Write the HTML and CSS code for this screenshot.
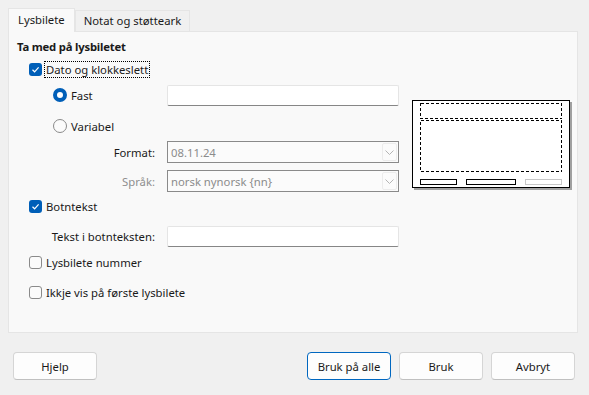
FILE: index.html
```html
<!DOCTYPE html>
<html lang="nn">
<head>
  <meta charset="UTF-8">
  <title>Topptekst og botntekst</title>
  <link rel="stylesheet" href="styles.css">
</head>
<body>
  <div class="dialog">
    <div class="tabs">
      <div class="tab active">Lysbilete</div>
      <div class="tab">Notat og støtteark</div>
    </div>

    <div class="panel">
      <div class="form">
        <div class="heading">Ta med på lysbiletet</div>

        <div class="row check-row">
          <span class="check on"><svg viewBox="0 0 13 13"><path d="M3.5 6.8 L5.6 8.8 L9.6 4.4"/></svg></span>
          <span class="label focus">Dato og klokkeslett</span>
        </div>

        <div class="row radio-row gap-4">
          <span class="radio-group">
            <span class="radio on"></span>
            <span class="label">Fast</span>
          </span>
          <span class="field"></span>
        </div>

        <div class="row radio-row gap-9">
          <span class="radio-group">
            <span class="radio"></span>
            <span class="label">Variabel</span>
          </span>
        </div>

        <div class="row field-row gap-4">
          <span class="field-label">Format:</span>
          <span class="select">
            <span class="select-text">08.11.24</span>
            <span class="select-btn"><svg viewBox="0 0 9 5"><path d="M0.5 0.5 L4.5 4.5 L8.5 0.5"/></svg></span>
          </span>
        </div>

        <div class="row field-row gap-7">
          <span class="field-label disabled">Språk:</span>
          <span class="select">
            <span class="select-text">norsk nynorsk {nn}</span>
            <span class="select-btn"><svg viewBox="0 0 9 5"><path d="M0.5 0.5 L4.5 4.5 L8.5 0.5"/></svg></span>
          </span>
        </div>

        <div class="row check-row gap-3">
          <span class="check on"><svg viewBox="0 0 13 13"><path d="M3.5 6.8 L5.6 8.8 L9.6 4.4"/></svg></span>
          <span class="label">Botntekst</span>
        </div>

        <div class="row field-row gap-8">
          <span class="field-label">Tekst i botnteksten:</span>
          <span class="field"></span>
        </div>

        <div class="row check-row gap-4">
          <span class="check"></span>
          <span class="label">Lysbilete nummer</span>
        </div>

        <div class="row check-row gap-8">
          <span class="check"></span>
          <span class="label">Ikkje vis på første lysbilete</span>
        </div>
      </div>

      <div class="preview">
        <svg width="161" height="92" viewBox="0 0 161 92" shape-rendering="crispEdges">
          <rect x="2.5" y="2.5" width="158" height="88" fill="#a0a0a0"/>
          <rect x="1.5" y="1.5" width="157" height="87" fill="#fff" stroke="#000"/>
          <rect x="9.5" y="4.5" width="141" height="15" fill="none" stroke="#000" stroke-dasharray="3 2"/>
          <rect x="9.5" y="21.5" width="141" height="51" fill="none" stroke="#000" stroke-dasharray="3 2"/>
          <rect x="9.5" y="80.5" width="36" height="5" fill="none" stroke="#000"/>
          <rect x="55.5" y="80.5" width="49" height="5" fill="none" stroke="#000"/>
          <rect x="114.5" y="80.5" width="36" height="5" fill="none" stroke="#c8c8c8"/>
        </svg>
      </div>
    </div>

    <div class="footer">
      <button class="btn">Hjelp</button>
      <div class="actions">
        <button class="btn default">Bruk på alle</button>
        <button class="btn">Bruk</button>
        <button class="btn">Avbryt</button>
      </div>
    </div>
  </div>
</body>
</html>
```

FILE: styles.css
```css
* {
  margin: 0;
  padding: 0;
  box-sizing: border-box;
}

body {
  background: #f0f0f0;
  font-family: 'Noto Sans', 'Open Sans', sans-serif;
  font-size: 11.3px;
  color: #1a1a1a;
}

.dialog {
  padding: 8px 11px 0 8px;
}

/* tabs */
.tabs {
  display: flex;
  align-items: flex-end;
  height: 23px;
}

.tab {
  height: 21px;
  padding: 0 8px;
  line-height: 19px;
  border: 1px solid #e5e5e5;
  border-bottom: none;
  background: #f0f0f0;
}

.tab.active {
  height: 24px;
  margin-bottom: -1px;
  line-height: 22px;
  padding: 0 9px;
  background: #f9f9f9;
  position: relative;
  z-index: 1;
}

.panel {
  display: flex;
  height: 302px;
  border: 1px solid #e5e5e5;
  background: #f9f9f9;
}

/* form column */
.form {
  width: 390px;
  padding-top: 4px;
}

.heading {
  height: 22px;
  line-height: 22px;
  padding-left: 8px;
  font-weight: bold;
  letter-spacing: -0.2px;
}

.row {
  display: flex;
  align-items: center;
  height: 22px;
}

.gap-3 { margin-top: 3px; }
.gap-4 { margin-top: 4px; }
.gap-7 { margin-top: 7px; }
.gap-8 { margin-top: 8px; }
.gap-9 { margin-top: 9px; }

.check-row {
  padding-left: 20px;
}

.label {
  padding: 0 1px;
}

.check-row .label {
  margin-left: 3px;
}

.label.focus {
  outline: 1px dotted #000;
  outline-offset: 0;
  line-height: 15px;
}

.check {
  width: 13px;
  height: 13px;
  border: 1px solid #8a8a8a;
  border-radius: 3px;
  background: #fbfbfb;
}

.check.on {
  border: none;
  background: #005fb8;
}

.check svg {
  display: block;
  width: 13px;
  height: 13px;
  fill: none;
  stroke: #fff;
  stroke-width: 1.2;
}

.radio-row {
  padding-left: 44px;
}

.radio-group {
  display: flex;
  align-items: center;
  width: 114px;
}

.radio {
  width: 14px;
  height: 14px;
  border: 1px solid #8a8a8a;
  border-radius: 50%;
  background: #fbfbfb;
  margin-right: 3px;
}

.radio.on {
  border: 4px solid #005fb8;
  background: #fff;
}

.field-row {
  justify-content: flex-end;
}

.field-label {
  margin-right: 12px;
}

.field-label.disabled {
  color: #8f8f8f;
}

.field {
  width: 232px;
  height: 21px;
  background: #fff;
  border: 1px solid #e5e5e5;
  border-bottom-color: #868686;
  border-radius: 2px;
}

.select {
  display: flex;
  align-items: center;
  justify-content: space-between;
  width: 232px;
  height: 22px;
  padding: 0 1px 0 3px;
  border: 1px solid #8a8a8a;
  background: #fbfbfb;
  color: #8c8c8c;
}

.select-btn {
  display: flex;
  align-items: center;
  justify-content: center;
  width: 15px;
  height: 18px;
  border: 1px solid #ececec;
  border-radius: 2px;
}

.select-btn svg {
  width: 9px;
  height: 5px;
  fill: none;
  stroke: #b4b4b4;
}

/* preview */
.preview {
  margin: 67px 0 0 12px;
}

.preview svg {
  display: block;
}

/* buttons */
.footer {
  display: flex;
  justify-content: space-between;
  margin-top: 19px;
  padding-left: 5px;
}

.actions {
  display: flex;
  gap: 8px;
  margin-right: 3px;
}

.btn {
  width: 84px;
  height: 28px;
  font-family: inherit;
  font-size: 11.3px;
  color: #1a1a1a;
  background: #fdfdfd;
  border: 1px solid #d5d5d5;
  border-bottom-color: #c0c0c0;
  border-radius: 4px;
}

.btn.default {
  border-color: #0067c0;
}
```
